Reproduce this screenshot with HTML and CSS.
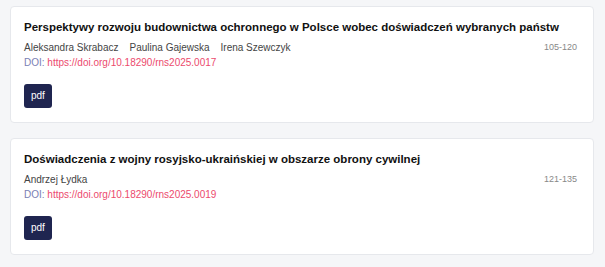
FILE: index.html
```html
<!DOCTYPE html>
<html lang="pl">
<head>
    <meta charset="UTF-8">
    <meta name="viewport" content="width=device-width, initial-scale=1.0">
    <title>Artykuły</title>
    <link rel="stylesheet" href="styles.css">
</head>
<body>
    <div class="list">
        <div class="article">
            <h3 class="title">Perspektywy rozwoju budownictwa ochronnego w Polsce wobec doświadczeń wybranych państw</h3>
            <div class="meta">
                <div class="info">
                    <div class="authors">
                        <span>Aleksandra Skrabacz</span>
                        <span>Paulina Gajewska</span>
                        <span>Irena Szewczyk</span>
                    </div>
                    <div class="doi">DOI: <a href="#">https://doi.org/10.18290/rns2025.0017</a></div>
                </div>
                <div class="pages">105-120</div>
            </div>
            <a class="pdf" href="#">pdf</a>
        </div>
        <div class="article">
            <h3 class="title">Doświadczenia z wojny rosyjsko-ukraińskiej w obszarze obrony cywilnej</h3>
            <div class="meta">
                <div class="info">
                    <div class="authors">
                        <span>Andrzej Łydka</span>
                    </div>
                    <div class="doi">DOI: <a href="#">https://doi.org/10.18290/rns2025.0019</a></div>
                </div>
                <div class="pages">121-135</div>
            </div>
            <a class="pdf" href="#">pdf</a>
        </div>
    </div>
</body>
</html>
```

FILE: styles.css
```css
body {
    font-family: "Liberation Sans", Arial, sans-serif;
    background-color: #f5f6f8;
    margin: 0;
}
.list {
    display: flex;
    flex-direction: column;
    gap: 15px;
    padding: 6px 11px 0 10px;
}
.article {
    background: #fff;
    border: 1px solid #e6e8ec;
    border-radius: 4px;
    padding: 12px 16px 14px 13px;
}
.title {
    font-size: 11.5px;
    font-weight: bold;
    color: #111;
    margin: 0 0 5px;
    line-height: 16px;
}
.meta {
    display: flex;
    justify-content: space-between;
    align-items: flex-start;
}
.authors {
    display: flex;
    gap: 11px;
    font-size: 10px;
    color: #444;
    line-height: 15px;
}
.doi {
    font-size: 10px;
    color: #7a80b4;
    line-height: 15px;
}
.doi a {
    color: #ec4a6d;
    text-decoration: none;
}
.pages {
    font-size: 9px;
    color: #888;
    line-height: 15px;
}
.pdf {
    display: inline-block;
    margin-top: 14px;
    background-color: #1f2550;
    color: #fff;
    font-size: 10px;
    text-decoration: none;
    border-radius: 3px;
    padding: 6px 7px;
    line-height: 12px;
}
```
